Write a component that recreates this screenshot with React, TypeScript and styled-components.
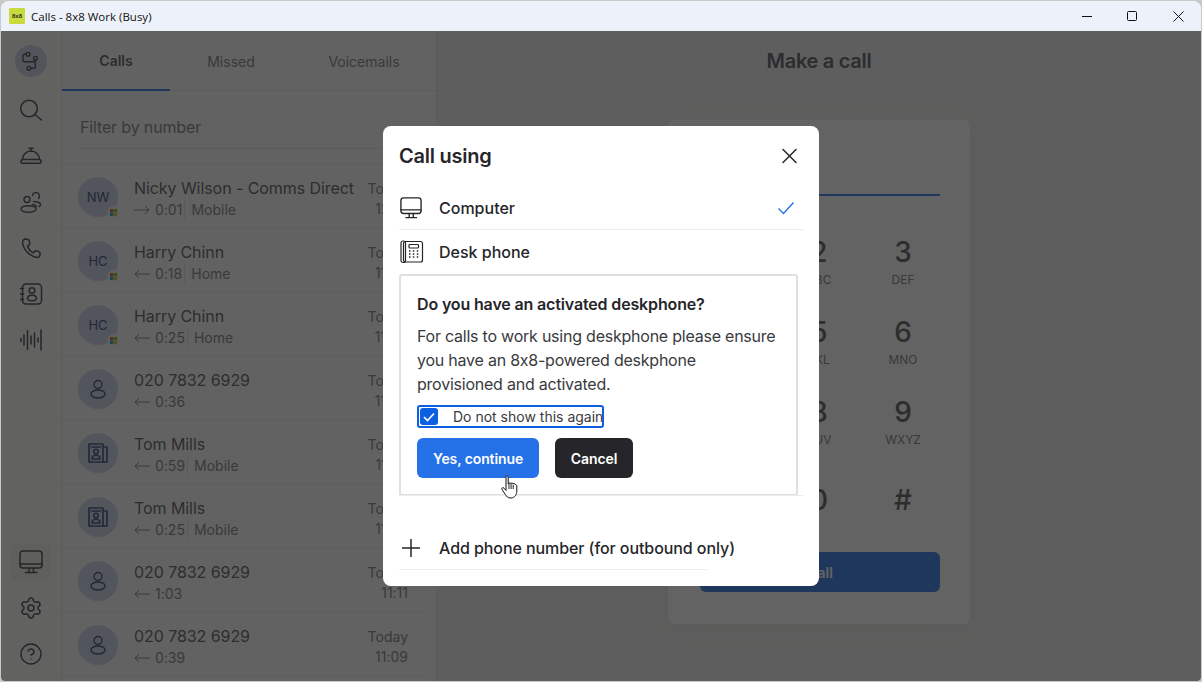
import React from "react";
import styled, { createGlobalStyle } from "styled-components";
import { Settings, CircleHelp } from "lucide-react";

const Global = createGlobalStyle`
  html, body { margin: 0; padding: 0; background: #c9c9c9; overflow: hidden; }
  * { box-sizing: border-box; }
`;

const Window = styled.div`
  width: 1200px; height: 680px; margin: 1px; display: flex; flex-direction: column;
  border-radius: 8px 8px 4px 4px; overflow: hidden; background: #efefed;
  font-family: Inter, "Liberation Sans", sans-serif; color: #26262a; font-feature-settings: "calt" 0;
`;
const TitleBar = styled.header`
  height: 30px; flex: none; background: #edf2fa; display: flex; align-items: center; padding-left: 8px;
`;
const Logo = styled.div`
  width: 16px; height: 16px; background: #c9dc3e; display: flex; align-items: center; justify-content: center;
  font: 700 6px "Liberation Sans", sans-serif; color: #2b2b2b; border-radius: 1px;
`;
const TitleText = styled.span`
  margin-left: 6px; font: 400 11.5px "Open Sans", "Noto Sans", sans-serif; color: #111; flex: 1;
`;
const WinButtons = styled.div`display: flex; align-items: center;`;
const WinButton = styled.div<{ $w: number }>`
  width: ${p => p.$w}px; height: 30px; display: flex; align-items: center; justify-content: center; color: #111;
`;
const Body = styled.div`flex: 1; display: flex; position: relative; min-height: 0;`;
const Sidebar = styled.nav`
  width: 61px; flex: none; background: #fbfbf8; border-right: 1px solid #ecece8; display: flex; flex-direction: column; align-items: center;
  padding-top: 14px;
`;
const NavButton = styled.div<{ $active?: boolean; $selected?: boolean; $gap?: number }>`
  width: ${p => (p.$selected ? 40 : 32)}px; height: ${p => (p.$selected ? 38 : 32)}px; flex: none; display: flex; align-items: center; justify-content: center;
  border-radius: ${p => (p.$selected ? "6px" : "50%")};
  background: ${p => (p.$active ? "#c8d2e4" : p.$selected ? "#f0f1e6" : "transparent")};
  color: #3a3a40; margin-bottom: ${p => p.$gap ?? 14}px;
`;
const NavSpacer = styled.div`flex: 1;`;
const ListPane = styled.section`
  width: 375px; flex: none; background: #fbfbfb; border-right: 1px solid #e6e6e4; display: flex; flex-direction: column; overflow: hidden;
`;
const Tabs = styled.div`height: 60px; flex: none; display: flex; border-bottom: 1px solid #e8e8e6;`;
const Tab = styled.div<{ $active?: boolean; $w: number }>`
  width: ${p => p.$w}px; height: 60px; display: flex; align-items: center; justify-content: center; font-size: 14px;
  font-weight: ${p => (p.$active ? 600 : 400)}; color: ${p => (p.$active ? "#505054" : "#78787c")};
  border-bottom: ${p => (p.$active ? "2px solid #2571e8" : "none")};
`;
const FilterArea = styled.div`
  height: 74px; flex: none; padding: 14px 16px 0 17px; border-bottom: 1px solid #e8e8e6;
`;
const FilterInput = styled.div`
  height: 44px; display: flex; align-items: center; font-size: 16px; letter-spacing: -0.15px; padding-left: 1px; color: #78787c; border-bottom: 1px solid #e8e6d8;
`;
const Row = styled.div`
  height: 64px; flex: none; display: flex; align-items: center; padding: 0 28px 0 16px; position: relative;
  &::after { content: ""; position: absolute; left: 0; right: 12px; bottom: 0; height: 1px; background: #ebebea; }
`;
const Avatar = styled.div`
  width: 40px; height: 40px; border-radius: 50%; background: #c8d2e4; color: #2a4070; font-size: 13px; flex: none;
  display: flex; align-items: center; justify-content: center; position: relative;
`;
const Badge = styled.div`
  position: absolute; right: -1px; bottom: -1px; width: 12px; height: 12px; border-radius: 50%; background: #e9eef6;
  display: flex; align-items: center; justify-content: center;
`;
const RowText = styled.div`flex: 1; min-width: 0; margin-left: 16px; padding-top: 2px;`;
const RowName = styled.div`font-size: 16px; line-height: 23px; color: #505054; white-space: nowrap; letter-spacing: -0.07px;`;
const RowSub = styled.div`display: flex; align-items: center; font-size: 14px; line-height: 20px; color: #78787c;`;
const Arrow = styled.span`display: inline-flex; width: 21px; flex: none;`;
const SubLabel = styled.span`
  border-left: 1px solid #e3e3e3; margin-left: 2px; padding-left: 6px;
`;
const RowTime = styled.div`
  text-align: right; font-size: 14px; line-height: 20px; color: #78787c; flex: none; width: 44px; padding-top: 4px;
`;
const Detail = styled.main`flex: 1; display: flex; flex-direction: column; align-items: center; min-width: 0;`;
const DetailHeader = styled.div`
  align-self: stretch; height: 60px; flex: none; border-bottom: 1px solid #e6e6e4; display: flex; align-items: center; justify-content: center;
  font-size: 20px; font-weight: 600; letter-spacing: -0.3px; color: #505054;
`;
const DialCard = styled.div`
  width: 302px; margin-top: 29px; padding: 32px 30px 32px 32px; background: #ffffff; border-radius: 6px;
  box-shadow: 0 4px 24px rgba(0,0,0,.07); display: flex; flex-direction: column;
`;
const DialInput = styled.div`height: 44px; flex: none; border-bottom: 2px solid #2571e8;`;
const Keypad = styled.div`
  margin: 36px 0 0 -2px; display: grid; grid-template-columns: repeat(3, 84px); grid-template-rows: 80px 80px 88px 40px; justify-content: center;
`;
const Key = styled.div`display: flex; flex-direction: column; align-items: center;`;
const KeyDigit = styled.div`font-size: 28px; line-height: 40px; font-weight: 500; color: #505054;`;
const KeyLetters = styled.div`font-size: 12px; line-height: 16px; color: #78787c;`;
const CallButton = styled.div`
  height: 40px; margin-top: 32px; flex: none; background: #2571e8; border-radius: 6px; color: #fff; font-weight: 600; font-size: 14px;
  display: flex; align-items: center; justify-content: center;
`;
const Overlay = styled.div`
  position: absolute; inset: 0; background: rgba(29,29,29,.69); display: flex; align-items: center; justify-content: center;
`;
const Modal = styled.div`
  width: 436px; height: 460px; background: #fff; border-radius: 8px; position: relative; padding: 16px 16px 0; display: flex; flex-direction: column;
`;
const ModalHeader = styled.div`
  height: 28px; flex: none; display: flex; align-items: center; justify-content: space-between; padding-right: 4px; margin-bottom: 18px;
`;
const ModalTitle = styled.h2`margin: 0; font-size: 20px; font-weight: 600; letter-spacing: -0.25px; color: #26262a;`;
const OptionRow = styled.div<{ $h: number; $rule?: boolean }>`
  height: ${p => p.$h}px; flex: none; display: flex; align-items: center;
  padding-bottom: ${p => (p.$rule ? 1 : 0)}px;
  border-bottom: ${p => (p.$rule ? "1px solid #ececec" : "none")};
`;
const OptionIcon = styled.div`width: 40px; flex: none; display: flex; padding-left: 1px; color: #26262a;`;
const OptionLabel = styled.span`flex: 1; font-size: 16px; font-weight: 500; color: #26262a;`;
const CheckMark = styled.div`display: flex; margin-right: 8px;`;
const InfoBox = styled.div`
  width: 399px; height: 222px; flex: none; border: 2px solid #e0e0e0; border-radius: 3px; padding: 16px 16px;
`;
const InfoRule = styled.div`height: 1px; flex: none; margin-top: -1px; background: #ececec;`;
const InfoHeading = styled.div`font-size: 16px; line-height: 24px; font-weight: 600; color: #26262a; letter-spacing: -0.15px;`;
const InfoBody = styled.p`margin: 8px 0 0; font-size: 16px; line-height: 24px; letter-spacing: -0.23px; color: #3a3a3e; width: 362px;`;
const CheckRow = styled.div`
  margin-top: 9px; width: 187px; height: 23px; border: 2px solid #0b5fe0; border-radius: 3px; display: flex; align-items: center; padding-left: 1px;
`;
const CheckBox = styled.div`
  width: 18px; height: 17px; border-radius: 3px; background: #0b5fe0; display: flex; align-items: center; justify-content: center; flex: none;
`;
const CheckLabel = styled.span`margin-left: 15px; font-size: 14px; color: #3a3a3e; white-space: nowrap;`;
const ButtonRow = styled.div`display: flex; gap: 16px; margin-top: 10px;`;
const ActionButton = styled.div<{ $w: number; $dark?: boolean }>`
  width: ${p => p.$w}px; height: 40px; border-radius: 6px; background: ${p => (p.$dark ? "#26262a" : "#2571e8")}; color: #fff;
  font-size: 14px; font-weight: 600; letter-spacing: -0.1px; display: flex; align-items: center; justify-content: center;
`;
const AddRow = styled.div`
  margin-top: 31px; width: 308px; height: 43px; flex: none; display: flex; align-items: center; border-bottom: 1px solid #ececec;
`;
const AddLabel = styled.span`font-size: 16px; font-weight: 500; color: #26262a; white-space: nowrap; letter-spacing: -0.08px;`;
const Cursor = styled.div`position: absolute; left: 117px; top: 349px; display: flex;`;

type IconProps = { s?: number };
const Svg: React.FC<React.PropsWithChildren<{ s: number; vb?: number; w?: number }>> = ({ s, vb = 24, w = 1.5, children }) => (
  <svg width={s} height={s} viewBox={`0 0 ${vb} ${vb}`} fill="none" stroke="currentColor" strokeWidth={w} strokeLinecap="round" strokeLinejoin="round">{children}</svg>
);
const FlowIcon = () => (
  <Svg s={24} w={1.4}>
    <circle cx="9" cy="5.3" r="1.9" /><circle cx="16.4" cy="9.3" r="1.9" /><circle cx="9.8" cy="19.3" r="1.9" />
    <path d="M7.1 5.3H6a2 2 0 0 0-2 2v3.4a2 2 0 0 0 2 2h10.4" />
    <path d="M16.4 11.2v6.1a2 2 0 0 1-2 2h-2.7" />
  </Svg>
);
const SearchIcon = () => (
  <Svg s={24}><circle cx="10" cy="10.5" r="8.3" /><path d="M16 16.5l6.5 5.5" /></Svg>
);
const BellIcon = () => (
  <Svg s={24}><path d="M3.5 15.5a8.5 8.5 0 0 1 17 0" /><path d="M12 7V4.5M10 4.2h4" /><rect x="2" y="15.5" width="20" height="3.8" rx="1.9" /></Svg>
);
const PeopleIcon = () => (
  <Svg s={24} w={1.4}>
    <circle cx="8" cy="9.5" r="3" /><ellipse cx="9.5" cy="19" rx="7.5" ry="3.3" />
    <path d="M13.5 5.5a3.5 3.5 0 1 1 6 3" />
    <path d="M14.5 11.5c3 0 6 .8 7 2.5.5 1-.5 2-1.5 2.5" />
    <path d="M13.5 14.5c2 .3 3.5 1 4 2" />
  </Svg>
);
const PhoneIcon = () => (
  <Svg s={24}><path d="M6.6 3 9 3.4c.6.1 1 .5 1.1 1l.6 3c.1.5 0 1-.4 1.3L8.6 10.4c1 2.7 3.1 5 5.8 6.4l1.7-1.7c.4-.4.9-.5 1.4-.3l2.5.8c.6.2 1 .7 1 1.3v2.1c0 1.5-1.5 2.7-3 2.5C10 19.9 4.3 13.6 3.6 6.5 3.5 4.7 4.9 3 6.6 3Z" /></Svg>
);
const ContactsIcon = () => (
  <Svg s={24}><rect x="3.5" y="2" width="19" height="20" rx="3.5" /><path d="M1.5 6.5h3M1.5 12h3M1.5 17.5h3" /><circle cx="13" cy="8.5" r="2.8" /><ellipse cx="13" cy="16" rx="4.5" ry="2.8" /></Svg>
);
const WaveIcon = () => (
  <Svg s={24}><path d="M2 10.5v3M5 7v10M8.5 2.5v19M12 8v8M15.5 5v14M19 10v4M22 2v20" /></Svg>
);
const MonitorIcon: React.FC<IconProps> = ({ s = 24 }) => (
  <Svg s={s}><rect x="1" y="1" width="22" height="17" rx="3" /><path d="M1 14h22M10 18v4M14.5 18v4M6.5 22.5h11.5" /></Svg>
);
const PersonGlyph = () => (
  <Svg s={20} vb={20} w={1.4}><circle cx="10" cy="5.5" r="4" /><ellipse cx="10" cy="15" rx="7" ry="4" /></Svg>
);
const BookGlyph = () => (
  <Svg s={20} vb={20} w={1.6}>
    <rect x="1" y="1" width="14" height="18" /><path d="M15 4h4v15h-4M3.5 4h9" /><circle cx="8" cy="8.5" r="2.3" /><path d="M4 16c0-5 8-5 8 0Z" />
  </Svg>
);
const DeskPhoneIcon = () => (
  <svg width="24" height="24" viewBox="0 0 24 24" fill="none" stroke="currentColor" strokeWidth="1.2" strokeLinejoin="round">
    <rect x="3.5" y="1.5" width="19" height="20.5" rx="2" />
    <rect x="1" y="1" width="4.5" height="21.5" rx="2" />
    <rect x="9" y="4.5" width="9.5" height="3.5" rx=".8" />
    <path d="M9 11h1.5M12.8 11h1.5M16.8 11h1.5M9 14h1.5M12.8 14h1.5M16.8 14h1.5M9 17h1.5M12.8 17h1.5M16.8 17h1.5" strokeWidth="1.3" />
  </svg>
);
const MsLogo = () => (
  <svg width="7" height="7" viewBox="0 0 8 8">
    <rect width="3.8" height="3.8" fill="#f25022" /><rect x="4.2" width="3.8" height="3.8" fill="#7fba00" />
    <rect y="4.2" width="3.8" height="3.8" fill="#00a4ef" /><rect x="4.2" y="4.2" width="3.8" height="3.8" fill="#ffb900" />
  </svg>
);
const ArrowGlyph: React.FC<{ out?: boolean }> = ({ out }) => (
  <svg width="16" height="10" viewBox="0 0 16 10" fill="none" stroke="currentColor" strokeWidth="1" style={out ? undefined : { transform: "scaleX(-1)" }}>
    <path d="M0 5h15M11 1l4 4-4 4" />
  </svg>
);
const HandCursor = () => (
  <svg width="19" height="24" viewBox="0 0 17 24">
    <path d="M5 1.8c0-1.3 2.2-1.3 2.2 0V9l.6-.2c0-1.4 2-1.4 2.1 0 .2-1.2 2-1.1 2.1.2.3-1 2-.8 2 .5.4 0 1.8.2 1.8 1.6v5c0 3.3-2 6.9-6 6.9-3.2 0-4.2-1.5-5.5-3.6L1 14.5c-.8-1.4 1-2.6 2-1.3l2 2.2Z" fill="#fff" stroke="#111" strokeWidth="1" strokeLinejoin="round" />
    <path d="M8 9v5M10.1 9v5M12.2 9.6V14" stroke="#111" strokeWidth=".9" fill="none" />
  </svg>
);

type Call = { name: string; init?: string; kind: "ms" | "person" | "book"; out?: boolean; dur: string; label?: string; time: string };
const calls: Call[] = [
  { name: "Nicky Wilson - Comms Direct", init: "NW", kind: "ms", out: true, dur: "0:01", label: "Mobile", time: "12:01" },
  { name: "Harry Chinn", init: "HC", kind: "ms", dur: "0:18", label: "Home", time: "11:54" },
  { name: "Harry Chinn", init: "HC", kind: "ms", dur: "0:25", label: "Home", time: "11:48" },
  { name: "020 7832 6929", kind: "person", dur: "0:36", time: "11:40" },
  { name: "Tom Mills", kind: "book", dur: "0:59", label: "Mobile", time: "11:32" },
  { name: "Tom Mills", kind: "book", dur: "0:25", label: "Mobile", time: "11:20" },
  { name: "020 7832 6929", kind: "person", dur: "1:03", time: "11:11" },
  { name: "020 7832 6929", kind: "person", dur: "0:39", time: "11:09" },
];
const keys = [["", ""], ["2", "ABC"], ["3", "DEF"], ["", ""], ["5", "JKL"], ["6", "MNO"], ["", ""], ["8", "TUV"], ["9", "WXYZ"], ["", ""], ["0", ""], ["#", ""]];

export default function App() {
  return (
    <>
      <Global />
      <Window>
        <TitleBar>
          <Logo>8x8</Logo>
          <TitleText>Calls - 8x8 Work (Busy)</TitleText>
          <WinButtons>
            <WinButton $w={44}><svg width="10" height="10" viewBox="0 0 10 10" stroke="currentColor"><path d="M0 5.5h10" /></svg></WinButton>
            <WinButton $w={46}><svg width="10" height="10" viewBox="0 0 10 10" fill="none" stroke="currentColor"><rect x=".5" y=".5" width="9" height="9" rx="1" /></svg></WinButton>
            <WinButton $w={46}><svg width="11" height="11" viewBox="0 0 11 11" stroke="currentColor"><path d="M.5.5l10 10M10.5.5l-10 10" /></svg></WinButton>
          </WinButtons>
        </TitleBar>
        <Body>
          <Sidebar>
            <NavButton $active $gap={17}><FlowIcon /></NavButton>
            <NavButton><SearchIcon /></NavButton>
            <NavButton><BellIcon /></NavButton>
            <NavButton><PeopleIcon /></NavButton>
            <NavButton><PhoneIcon /></NavButton>
            <NavButton><ContactsIcon /></NavButton>
            <NavButton><WaveIcon /></NavButton>
            <NavSpacer />
            <NavButton $selected $gap={11}><MonitorIcon /></NavButton>
            <NavButton><Settings size={24} strokeWidth={1.5} /></NavButton>
            <NavButton $gap={11}><CircleHelp size={24} strokeWidth={1.4} /></NavButton>
          </Sidebar>
          <ListPane>
            <Tabs>
              <Tab $active $w={108}>Calls</Tab>
              <Tab $w={122}>Missed</Tab>
              <Tab $w={144}>Voicemails</Tab>
            </Tabs>
            <FilterArea><FilterInput>Filter by number</FilterInput></FilterArea>
            {calls.map((c, i) => (
              <Row key={i}>
                <Avatar>
                  {c.init}
                  {c.kind === "person" && <PersonGlyph />}
                  {c.kind === "book" && <BookGlyph />}
                  {c.kind === "ms" && <Badge><MsLogo /></Badge>}
                </Avatar>
                <RowText>
                  <RowName>{c.name}</RowName>
                  <RowSub>
                    <Arrow><ArrowGlyph out={c.out} /></Arrow>
                    {c.dur}
                    {c.label && <SubLabel>{c.label}</SubLabel>}
                  </RowSub>
                </RowText>
                <RowTime>Today<br />{c.time}</RowTime>
              </Row>
            ))}
          </ListPane>
          <Detail>
            <DetailHeader>Make a call</DetailHeader>
            <DialCard>
              <DialInput />
              <Keypad>
                {keys.map(([d, l], i) => (
                  <Key key={i}>
                    {d && <KeyDigit>{d}</KeyDigit>}
                    {l && <KeyLetters>{l}</KeyLetters>}
                  </Key>
                ))}
              </Keypad>
              <CallButton>Call</CallButton>
            </DialCard>
          </Detail>
          <Overlay>
            <Modal>
              <ModalHeader>
                <ModalTitle>Call using</ModalTitle>
                <svg width="20" height="20" viewBox="0 0 20 20" stroke="#26262a" strokeWidth="1.5" strokeLinecap="round"><path d="M4 3.5l13 13M17 3.5l-13 13" /></svg>
              </ModalHeader>
              <OptionRow $h={42} $rule>
                <OptionIcon><MonitorIcon s={22} /></OptionIcon>
                <OptionLabel>Computer</OptionLabel>
                <CheckMark>
                  <svg width="18" height="14" viewBox="0 0 18 14" fill="none" stroke="#2571e8" strokeWidth="1.4"><path d="M1.5 7.5l5 5L16.5 1.5" /></svg>
                </CheckMark>
              </OptionRow>
              <OptionRow $h={44}>
                <OptionIcon><DeskPhoneIcon /></OptionIcon>
                <OptionLabel>Desk phone</OptionLabel>
              </OptionRow>
              <InfoBox>
                <InfoHeading>Do you have an activated deskphone?</InfoHeading>
                <InfoBody>For calls to work using deskphone please ensure you have an 8x8-powered deskphone provisioned and activated.</InfoBody>
                <CheckRow>
                  <CheckBox>
                    <svg width="12" height="10" viewBox="0 0 12 10" fill="none" stroke="#fff" strokeWidth="1.6"><path d="M1 5l3.5 3.5L11 1.5" /></svg>
                  </CheckBox>
                  <CheckLabel>Do not show this again</CheckLabel>
                </CheckRow>
                <ButtonRow>
                  <ActionButton $w={122}>Yes, continue</ActionButton>
                  <ActionButton $w={78} $dark>Cancel</ActionButton>
                </ButtonRow>
              </InfoBox>
              <InfoRule />
              <AddRow>
                <OptionIcon>
                  <svg width="22" height="22" viewBox="0 0 22 22" stroke="#26262a" strokeWidth="1.5"><path d="M11 2v18M2 11h18" /></svg>
                </OptionIcon>
                <AddLabel>Add phone number (for outbound only)</AddLabel>
              </AddRow>
              <Cursor><HandCursor /></Cursor>
            </Modal>
          </Overlay>
        </Body>
      </Window>
    </>
  );
}
